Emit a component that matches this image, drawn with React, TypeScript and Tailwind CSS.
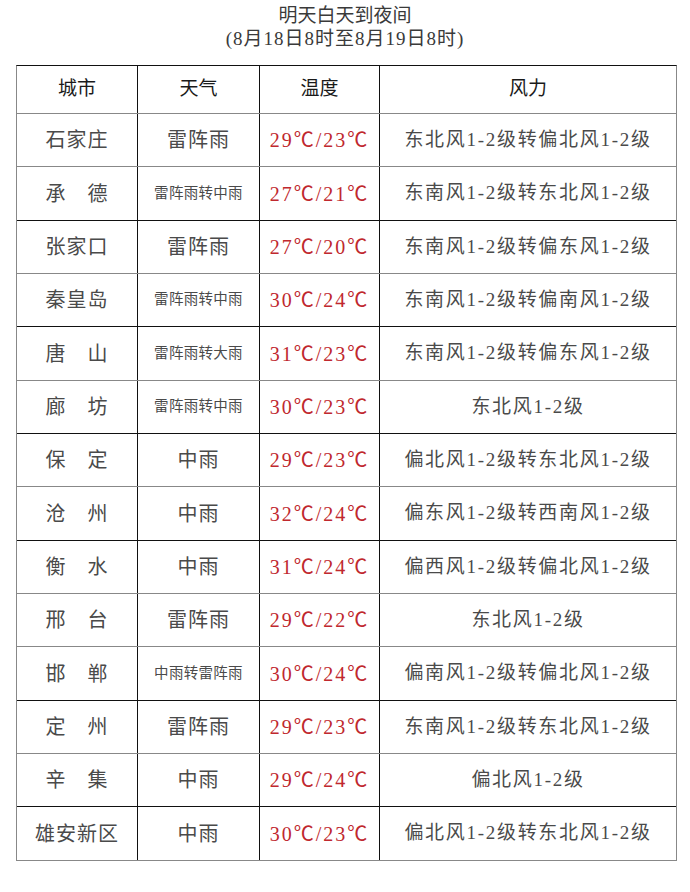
import React from 'react';

type Row = {
  city: string;
  weather: string;
  temp: string;
  wind: string;
  dark?: boolean; // bottom line drawn in black
};

const rows: Row[] = [
  { city: '石家庄', weather: '雷阵雨', temp: '29℃/23℃', wind: '东北风1-2级转偏北风1-2级' },
  { city: '承　德', weather: '雷阵雨转中雨', temp: '27℃/21℃', wind: '东南风1-2级转东北风1-2级', dark: true },
  { city: '张家口', weather: '雷阵雨', temp: '27℃/20℃', wind: '东南风1-2级转偏东风1-2级' },
  { city: '秦皇岛', weather: '雷阵雨转中雨', temp: '30℃/24℃', wind: '东南风1-2级转偏南风1-2级', dark: true },
  { city: '唐　山', weather: '雷阵雨转大雨', temp: '31℃/23℃', wind: '东南风1-2级转偏东风1-2级' },
  { city: '廊　坊', weather: '雷阵雨转中雨', temp: '30℃/23℃', wind: '东北风1-2级', dark: true },
  { city: '保　定', weather: '中雨', temp: '29℃/23℃', wind: '偏北风1-2级转东北风1-2级' },
  { city: '沧　州', weather: '中雨', temp: '32℃/24℃', wind: '偏东风1-2级转西南风1-2级', dark: true },
  { city: '衡　水', weather: '中雨', temp: '31℃/24℃', wind: '偏西风1-2级转偏北风1-2级' },
  { city: '邢　台', weather: '雷阵雨', temp: '29℃/22℃', wind: '东北风1-2级' },
  { city: '邯　郸', weather: '中雨转雷阵雨', temp: '30℃/24℃', wind: '偏南风1-2级转偏北风1-2级', dark: true },
  { city: '定　州', weather: '雷阵雨', temp: '29℃/23℃', wind: '东南风1-2级转东北风1-2级' },
  { city: '辛　集', weather: '中雨', temp: '29℃/24℃', wind: '偏北风1-2级', dark: true },
  { city: '雄安新区', weather: '中雨', temp: '30℃/23℃', wind: '偏北风1-2级转东北风1-2级' },
];

const font = { fontFamily: '"Liberation Serif", "Noto Sans CJK SC", serif' };

export default function App() {
  return (
    <div className="w-[690px] h-[892px] bg-white text-[#4a4a4a]" style={font}>
      <div className="pt-[4px] text-center text-[19px] leading-[23px] text-[#3a3a3a]">
        <div>明天白天到夜间</div>
        <div className="tracking-[1px]">(8月18日8时至8月19日8时)</div>
      </div>

      <div className="ml-[16px] mt-[15px] w-[661px] border-t border-t-[#111] border-l border-l-[#888] border-r border-r-[#888]">
        {/* 表头 */}
        <div className="grid grid-cols-[121px_122px_120px_1fr] h-[48px] border-b border-b-[#888] text-[19px] text-[#1a1a1a]">
          <div className="flex items-center justify-center border-r border-r-[#111]">城市</div>
          <div className="flex items-center justify-center border-r border-r-[#111]">天气</div>
          <div className="flex items-center justify-center border-r border-r-[#111]">温度</div>
          <div className="flex items-center justify-center">风力</div>
        </div>

        {rows.map((r) => (
          <div
            key={r.city}
            className={
              'grid grid-cols-[121px_122px_120px_1fr] h-[53.35px] border-b ' +
              (r.dark ? 'border-b-[#111]' : 'border-b-[#888]')
            }
          >
            <div className="flex items-center justify-center border-r border-r-[#111] text-[20px] tracking-[1px]">
              {r.city}
            </div>
            <div
              className={
                'flex items-center justify-center border-r border-r-[#111] ' +
                (r.weather.length > 3 ? 'text-[14.5px] tracking-[0.3px]' : 'text-[20px] tracking-[1px]')
              }
            >
              {r.weather}
            </div>
            <div className="flex items-center justify-center border-r border-r-[#111] text-[20px] tracking-[2px] text-[#c0282e]">
              {r.temp}
            </div>
            <div className="flex items-center justify-center text-[19px] tracking-[1.7px]">{r.wind}</div>
          </div>
        ))}
      </div>
    </div>
  );
}
